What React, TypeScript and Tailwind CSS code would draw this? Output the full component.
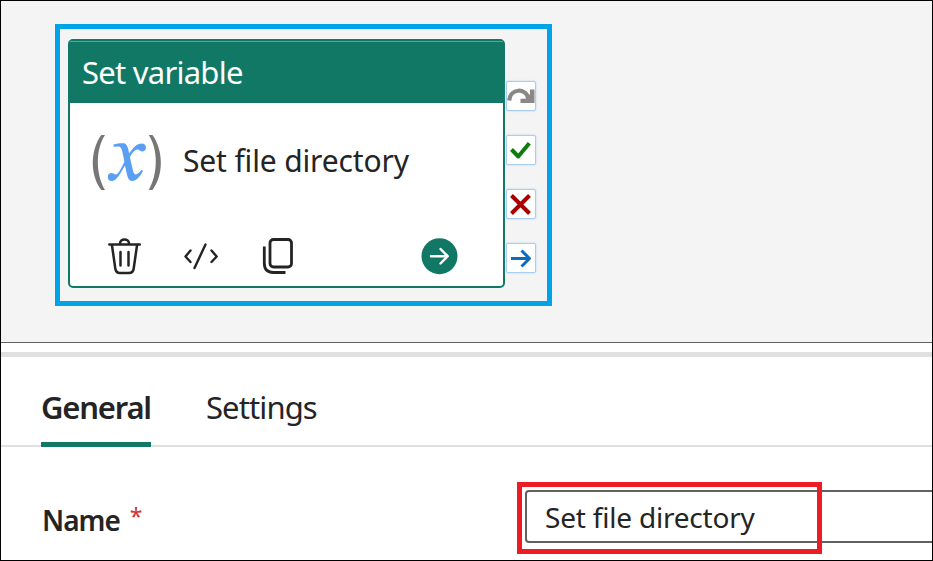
import React from "react";

const stroke = {
  fill: "none",
  stroke: "currentColor",
  strokeLinecap: "round" as const,
  strokeLinejoin: "round" as const,
};

function Port({ children }: { children: React.ReactNode }) {
  return (
    <div className="h-[30px] w-[30px] rounded-[2px] border border-[#a9cdf3] bg-white shadow-[0_0_2px_#a9cdf3]">
      {children}
    </div>
  );
}

function VariableIcon() {
  return (
    <svg className="block h-[60px] w-[74px]" viewBox="90 132 74 60">
      <g fill="#767676">
        <path d="M101.200 135H105C95.500 149 95.500 174 105 190H101.200C90 175 90 151 101.200 135Z" />
        <path d="M152.500 135H148.700C158.200 149 158.200 174 148.700 190H152.500C163.700 175 163.700 151 152.500 135Z" />
      </g>
      <path
        fill="#5b9ff2"
        d="M113.500 144.500C118 143.600 121 143 125 143.500C127.500 145 128.400 149.500 129.300 153.500C133 147.500 137 143.500 141.500 143.500C144.500 143.500 146 145.300 146 147.500C146 150 144.200 151.400 142 151.400C140 151.400 139.500 149.600 137.500 149.600C134.500 149.600 132 153.500 129.900 157.200L132.500 168.500C133.300 172 134 174.500 135.500 174.500C137.500 174.500 139.500 172.500 141.500 169.800L143 171C140 176.500 136.500 181 132.200 181C128.500 181 127.300 176.500 126.300 171.500L125 165.500C120.500 173 117 181 111.500 181C109 181 107.800 179.200 107.800 177C107.800 174.500 109.300 173 111.500 173C113.500 173 114 174.600 115.800 174.600C118.500 174.600 121.500 167.500 124.400 161.800L122.500 152.500C121.500 148 120.500 146.500 117.800 146.500L113.500 146.800Z"
      />
    </svg>
  );
}

function ActivityCard() {
  return (
    <div className="flex h-[249px] w-[437px] flex-col rounded-[5px] border-2 border-[#117865] bg-white">
      <div className="h-[62px] shrink-0 border-t border-[#5fa295] bg-[#117865] pl-3 font-['Noto_Sans',sans-serif] text-[31px] leading-[60px] tracking-[-0.75px] text-white">
        Set variable
      </div>
      <div className="flex h-[114px] items-start pl-5 pt-[29px]">
        <VariableIcon />
        <span className="ml-[19px] whitespace-nowrap font-['Noto_Sans',sans-serif] text-[30px] leading-[58px] tracking-[-0.15px] text-[#242424]">
          Set file directory
        </span>
      </div>
      <div className="flex h-[60px] items-start pl-9 pt-[19px] text-[#242424]">
        <svg className="h-[40px] w-[36px]" viewBox="106 236 36 40" {...stroke} strokeWidth="2.500">
          <path d="M109.300 244.500H139.800M120 243.500C120 238 129 238 129 243.500M112 245.500L115.300 268.500C115.700 271.500 117.300 273 120 273H129C131.700 273 133.300 271.500 133.700 268.500L137 245.500M120.500 252V265.500M128.500 252V265.500" />
        </svg>
        <svg className="ml-[40px] h-[40px] w-[38px]" viewBox="182 236 38 40" {...stroke} strokeWidth="2.400">
          <path d="M190.500 250.500L185.500 256.500L190.500 262M211.500 250.500L216.700 256.500L211.500 262M205.500 244.500L194.500 268" />
        </svg>
        <svg className="ml-[40px] h-[40px] w-[34px]" viewBox="260 236 34 40" {...stroke} strokeWidth="2.800">
          <rect x="270" y="239.500" width="21.500" height="27.500" rx="3.500" />
          <path strokeLinecap="butt" d="M264.300 246.500V263Q264.300 272.500 273.500 272.500H285.500" />
        </svg>
        <svg className="ml-[127px] h-[40px] w-[38px]" viewBox="421 236 38 40">
          <circle cx="439.500" cy="256.200" r="18" fill="#117865" />
          <path d="M431 256.200H447.500M440.500 249L447.700 256.200L440.500 263.500" {...stroke} stroke="white" strokeWidth="2.400" />
        </svg>
      </div>
    </div>
  );
}

function Ports() {
  return (
    <div className="ml-px flex flex-col gap-6 pt-[42px]">
      <Port>
        <svg className="h-7 w-7" viewBox="507 82 28 28">
          <path d="M509.200 100.500C510 88.500 526 87 528.500 99" fill="none" stroke="#8a8886" strokeWidth="4.200" />
          <path d="M534.500 89.500V103H520.500V98.800H525.500L530 94V89.500Z" fill="#8a8886" />
        </svg>
      </Port>
      <Port>
        <svg className="h-7 w-7 text-[#107c10]" viewBox="507 136 28 28" {...stroke} strokeWidth="4" strokeLinecap="butt">
          <path d="M511.500 149.500L518.300 156.500L529.300 143.300" />
        </svg>
      </Port>
      <Port>
        <svg className="h-7 w-7 text-[#a80000]" viewBox="507 190 28 28" {...stroke} strokeWidth="4" strokeLinecap="butt">
          <path d="M511.500 195.500L529.500 213.500M529.500 195.500L511.500 213.500" />
        </svg>
      </Port>
      <Port>
        <svg className="h-7 w-7 text-[#0f6cbd]" viewBox="507 244 28 28" {...stroke} strokeWidth="3" strokeLinecap="butt">
          <path d="M511 258.500H530M521.500 250.500L529.500 258.500L521.500 266.500" />
        </svg>
      </Port>
    </div>
  );
}

export default function App() {
  return (
    <div className="flex h-[561px] w-[933px] flex-col overflow-hidden border border-black bg-white font-['Noto_Sans',sans-serif] text-[#242424]">
      <div className="h-[342px] shrink-0 border-b border-[#616161] bg-[#f4f4f4] pl-[54px] pt-[23px]">
        <div className="flex h-[282px] w-[497px] border-[5px] border-[#00a2e8] pl-2 pt-[10px]">
          <ActivityCard />
          <Ports />
        </div>
      </div>
      <div className="mt-[9px] h-[5px] shrink-0 bg-[#e0e0e0]" />
      <div className="flex h-[90px] shrink-0 items-end gap-[55px] border-b-2 border-[#e0e0e0] pl-10 text-[31px]">
        <div className="-mb-[2px] h-[80px] w-[110px] whitespace-nowrap border-b-[5px] border-[#117865] pt-[19px] font-semibold leading-[42px] tracking-[-1.2px]">
          General
        </div>
        <div className="-mb-[2px] h-[80px] whitespace-nowrap pt-[19px] leading-[42px] tracking-[-0.9px]">Settings</div>
      </div>
      <div className="relative flex pl-[41px] pt-[43px]">
        <label className="flex w-[483px] shrink-0 gap-[10px] pt-[9px] text-[28px] font-semibold leading-[42px] tracking-[-1px]">
          Name <span className="text-[23px] font-normal leading-[34px] text-[#d13438]">*</span>
        </label>
        <div className="h-[53px] w-[420px] shrink-0 whitespace-nowrap rounded-[4px] border-2 border-[#616161] pl-[18px] text-[28px] leading-[50px] tracking-[-0.2px]">
          Set file directory
        </div>
        <div className="absolute left-[516px] top-[35px] h-[72px] w-[305px] border-[5px] border-[#ed1c24]" />
      </div>
    </div>
  );
}
